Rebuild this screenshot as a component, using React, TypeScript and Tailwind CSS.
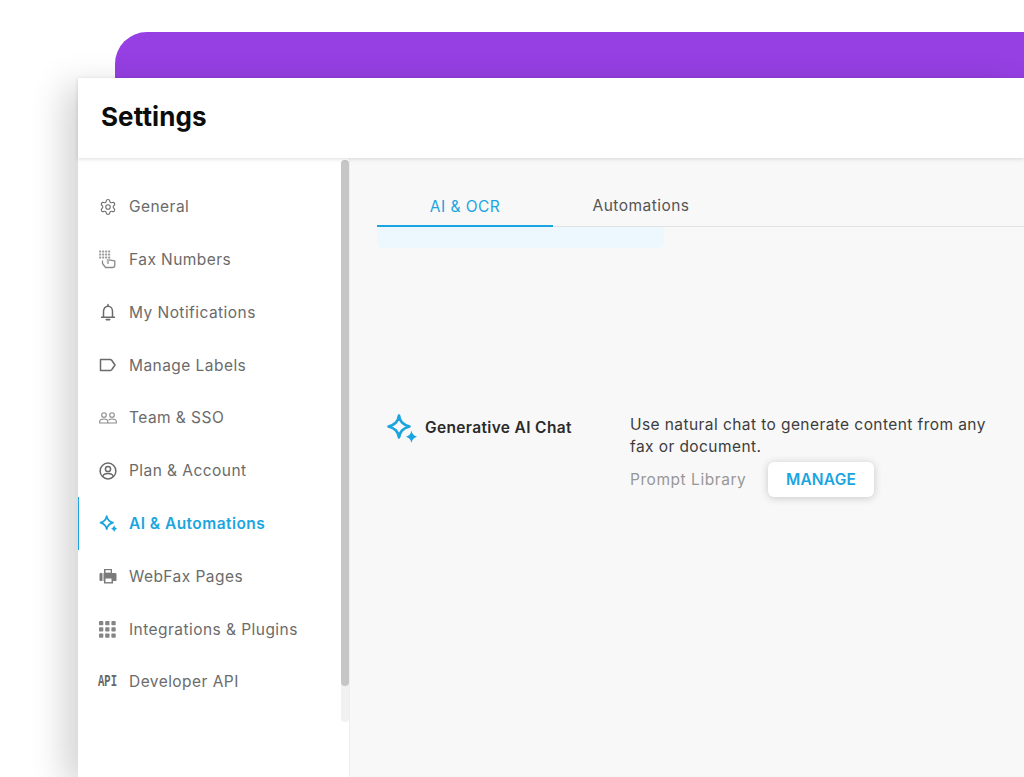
import React from "react";
import { Settings } from "lucide-react";

function Sparkle({ size, className, sw = 2.6 }: { size: number; className?: string; sw?: number }) {
  return (
    <svg width={size} height={size} viewBox="0 0 32 30" className={className} fill="none">
      <path d="M13 2.5 C14 8.5 16.5 11.5 23.5 13.5 C16.5 15.5 14 18.5 13 24.5 C12 18.5 9.5 15.5 2.5 13.5 C9.5 11.5 12 8.5 13 2.5 Z" stroke="currentColor" strokeWidth={sw} strokeLinejoin="round" />
      <path d="M25.5 17.5 C26 20.8 27.8 22.7 31 23.7 C27.8 24.7 26 26.6 25.5 29.9 C25 26.6 23.2 24.7 20 23.7 C23.2 22.7 25 20.8 25.5 17.5 Z" fill="currentColor" />
    </svg>
  );
}

function FaxKeypad() {
  return (
    <svg width="18" height="19" viewBox="0 0 18 19" fill="none">
      {[1, 4, 7, 10].map((x) =>
        [0.5, 3.5, 6.5].map((y) => <rect key={`${x}-${y}`} x={x - 0.9} y={y} width="2.1" height="2.1" rx="0.5" fill="#9a9a9a" />)
      )}
      <path d="M3.5 10.5 V13.5 L6.5 17.5 H13.5 C15 17.5 15.8 16.5 15.8 15.2 V10.8 L8.5 9.6 V12.5" stroke="#8a8a8a" strokeWidth="1.3" strokeLinejoin="round" />
      <rect x="8" y="9" width="2" height="5" fill="#b5b5b5" />
    </svg>
  );
}

function BellIcon() {
  return (
    <svg width="18" height="19" viewBox="0 0 18 19" fill="none">
      <path d="M9 1.5 V3 M4.5 14 V8.5 C4.5 5.5 6.3 3.3 9 3.3 C11.7 3.3 13.5 5.5 13.5 8.5 V14 M2.5 14.2 H15.5" stroke="#6a6a6a" strokeWidth="1.5" strokeLinecap="round" />
      <path d="M7.3 16.6 H10.7" stroke="#6a6a6a" strokeWidth="1.6" strokeLinecap="round" />
    </svg>
  );
}

function LabelIcon() {
  return (
    <svg width="18" height="14" viewBox="0 0 18 14" fill="none">
      <path d="M1.5 1.5 H11 C11.8 1.5 12.3 1.8 12.7 2.3 L16 7 L12.7 11.7 C12.3 12.2 11.8 12.5 11 12.5 H1.5 Z" stroke="#6a6a6a" strokeWidth="1.5" strokeLinejoin="round" />
    </svg>
  );
}

function TeamIcon() {
  return (
    <svg width="18" height="12" viewBox="0 0 18 12" fill="none" stroke="#8c8c8c" strokeWidth="1.1">
      <circle cx="5" cy="3" r="2.3" />
      <circle cx="13" cy="3" r="2.3" />
      <path d="M0.7 11 V9.6 C0.7 8 2.5 7 5 7 C7.5 7 8.8 8 8.8 9.6 V11 Z" />
      <path d="M8.8 11 H17.3 V9.6 C17.3 8 15.5 7 13 7 C11.6 7 10.4 7.4 9.6 8" />
    </svg>
  );
}

function AccountIcon() {
  return (
    <svg width="18" height="18" viewBox="0 0 18 18" fill="none" stroke="#6a6a6a" strokeWidth="1.5">
      <circle cx="9" cy="9" r="7.9" />
      <circle cx="9" cy="7" r="2.6" />
      <path d="M3.8 14.5 C4.4 12.4 6.3 11.6 9 11.6 C11.7 11.6 13.6 12.4 14.2 14.5" />
    </svg>
  );
}

function FaxPagesIcon() {
  return (
    <svg width="18" height="16" viewBox="0 0 18 16">
      <rect x="0.5" y="5" width="3" height="8" rx="1" fill="#7a7a7a" />
      <path d="M5 1 H13 V5 H16 C17 5 17.5 5.7 17.5 6.5 V12 C17.5 12.8 17 13 16 13 H14 V15.5 H5 V13 H4.5 V5 H5 Z" fill="#7a7a7a" />
      <rect x="6.5" y="2.2" width="5.2" height="2.4" fill="#ffffff" />
      <rect x="6.5" y="10.5" width="6" height="3.6" fill="#ffffff" />
    </svg>
  );
}

function GridIcon() {
  return (
    <svg width="17" height="17" viewBox="0 0 17 17">
      {[0, 6.2, 12.4].map((x) =>
        [0, 6.2, 12.4].map((y) => <rect key={`${x}-${y}`} x={x} y={y} width="4.3" height="4.3" rx="0.8" fill="#858585" />)
      )}
    </svg>
  );
}

const items: { label: string; icon: React.ReactNode; active?: boolean }[] = [
  { label: "General", icon: <Settings size={18} strokeWidth={1.5} color="#707070" /> },
  { label: "Fax Numbers", icon: <FaxKeypad /> },
  { label: "My Notifications", icon: <BellIcon /> },
  { label: "Manage Labels", icon: <LabelIcon /> },
  { label: "Team & SSO", icon: <TeamIcon /> },
  { label: "Plan & Account", icon: <AccountIcon /> },
  { label: "AI & Automations", icon: <Sparkle size={19} sw={3} className="text-[#1ba5e0]" />, active: true },
  { label: "WebFax Pages", icon: <FaxPagesIcon /> },
  { label: "Integrations & Plugins", icon: <GridIcon /> },
  { label: "Developer API", icon: <span className="-ml-[1px] inline-block origin-left scale-x-[0.66] font-['Liberation_Mono',monospace] text-[16px] font-bold text-[#666]">API</span> },
];

export default function App() {
  return (
    <div className="h-[777px] w-[1024px] overflow-hidden bg-white pt-8 font-['Inter',sans-serif]">
      <div className="ml-[115px] h-[46px] rounded-tl-[32px] bg-[#963fe3]" />
      <div className="relative ml-[78px] flex h-[699px] flex-col bg-white shadow-[-14px_8px_32px_rgba(0,0,0,0.17)]">
        <div className="z-10 flex h-20 shrink-0 items-center bg-white pb-[4px] pl-[23px] shadow-[0_1px_4px_rgba(0,0,0,0.14)]">
          <h1 className="text-[26px] font-bold tracking-[0.1px] text-[#0c0c0c]">Settings</h1>
        </div>
        <div className="flex min-h-0 flex-1">
          <nav className="relative w-[271px] shrink-0 bg-white pt-[22.5px]">
            {items.map((it) => (
              <div
                key={it.label}
                className={`flex h-[52.8px] items-center border-l pl-5 ${it.active ? "border-[#1ba5e0]" : "border-transparent"}`}
              >
                <span className="flex w-[30px] shrink-0 items-center justify-start">{it.icon}</span>
                <span className={`text-[15.5px] tracking-[0.45px] ${it.active ? "font-semibold text-[#1ba5e0]" : "text-[#6b6b6b]"}`}>
                  {it.label}
                </span>
              </div>
            ))}
            <div className="absolute right-0 top-[2px] h-[562px] w-2 rounded bg-[#f1f1f1]">
              <div className="h-[526px] w-2 rounded bg-[#c6c6c6]" />
            </div>
          </nav>
          <main className="flex-1 border-l border-[#eeeeee] bg-[#f8f8f8] pl-[27px]">
            <div className="mt-[22px] flex h-[47px] border-b border-[#e2e2e2]">
              <div className="flex h-[47px] w-[176px] items-center justify-center border-b-2 border-[#1ba5e0] pt-[8px] text-[15.5px] tracking-[0.45px] text-[#1ba5e0]">
                AI &amp; OCR
              </div>
              <div className="flex h-[46px] w-[176px] items-center justify-center pt-[6px] text-[15.5px] tracking-[0.45px] text-[#555]">
                Automations
              </div>
            </div>
            <div className="h-[21px] w-[287px] rounded-b-md bg-[#ecf8fd]" />
            <div className="mt-[165px] flex items-start">
              <Sparkle size={32} className="ml-[9px] mt-[-1px] shrink-0 text-[#1ba5e0]" />
              <div className="ml-[7px] w-[205px] shrink-0 pt-[4px] text-[15.5px] font-semibold leading-[22px] tracking-[0.35px] text-[#2a2a2a]">
                Generative AI Chat
              </div>
              <div className="w-[375px] shrink-0 pt-[1px] text-[15.5px] leading-[22px] tracking-[0.42px] text-[#3d3d3d]">
                <p>Use natural chat to generate content from any fax or document.</p>
                <div className="mt-[4px] flex items-center">
                  <span className="w-[138px] tracking-[0.55px] text-[#979797]">Prompt Library</span>
                  <button className="flex h-[35px] w-[106px] items-center justify-center rounded-md bg-white text-[15.5px] font-semibold tracking-[0.2px] text-[#1ba5e0] shadow-[0_1px_8px_rgba(0,0,0,0.2)]">
                    MANAGE
                  </button>
                </div>
              </div>
            </div>
          </main>
        </div>
      </div>
    </div>
  );
}
